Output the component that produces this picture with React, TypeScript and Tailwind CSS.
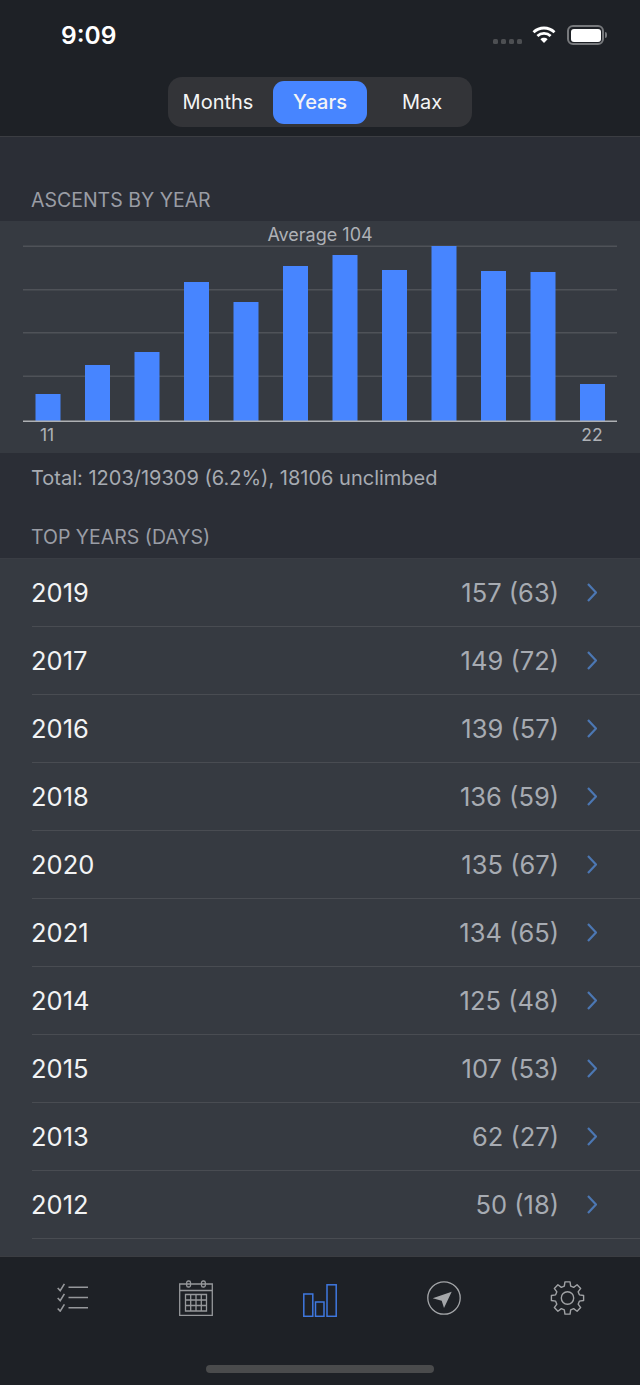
const barHeights = [27, 56, 69, 139, 119, 155, 166, 151, 175, 150, 149, 37];
const gridLines = [24.5, 68, 111, 154.5];

const topYears = [
  { year: '2019', value: '157 (63)' },
  { year: '2017', value: '149 (72)' },
  { year: '2016', value: '139 (57)' },
  { year: '2018', value: '136 (59)' },
  { year: '2020', value: '135 (67)' },
  { year: '2021', value: '134 (65)' },
  { year: '2014', value: '125 (48)' },
  { year: '2015', value: '107 (53)' },
  { year: '2013', value: '62 (27)' },
  { year: '2012', value: '50 (18)' },
];

function gearPath() {
  const points: string[] = [];
  const at = (r: number, deg: number) => {
    const a = (deg * Math.PI) / 180;
    return `${(17.5 + r * Math.sin(a)).toFixed(2)} ${(17 - r * Math.cos(a)).toFixed(2)}`;
  };
  for (let i = 0; i < 8; i++) {
    const c = i * 45;
    points.push(at(12.3, c - 15), at(16.3, c - 9), at(16.3, c + 9), at(12.3, c + 15));
  }
  return `M${points.join('L')}Z`;
}

function WifiIcon() {
  return (
    <svg width="24" height="17" viewBox="0 0 24 17" fill="none" stroke="white" strokeWidth="2.8">
      <path d="M1.5 6.2C7.4 .6 16.6 .6 22.5 6.2" />
      <path d="M5.4 10C9 6.6 15 6.6 18.6 10" />
      <path d="M12 17l-3.6-3.8c2-1.8 5.2-1.8 7.2 0z" fill="white" stroke="none" />
    </svg>
  );
}

function BatteryIcon() {
  return (
    <div className="flex items-center gap-[1px]">
      <div className="w-[37px] h-[20px] rounded-[6px] border-2 border-[#77797c] p-[1.5px]">
        <div className="w-full h-full rounded-[3px] bg-white" />
      </div>
      <div className="w-[2px] h-[6px] rounded-r bg-[#77797c]" />
    </div>
  );
}

function ChecklistIcon() {
  return (
    <svg width="31" height="29" viewBox="0 0 31 29" fill="none" stroke="#96989b" strokeWidth="1.6">
      <path d="M.7 5l2.5 2.6L7.4.8M.7 15l2.5 2.6 4.2-6.8M.7 25.500l2.500 2.600 4.200-6.800" />
      <path d="M11.500 4.300H31M11.500 14.500H31M11.500 24.800H31" />
    </svg>
  );
}

function CalendarIcon() {
  return (
    <svg width="34" height="36" viewBox="0 0 34 36" fill="none" stroke="#96989b" strokeWidth="1.300">
      <path d="M.7 4h7M11.500 4h11M26.500 4h6.800v31.300H.7V4zM.7 10.500h32.600" />
      <rect x="7.700" y="1" width="3.800" height="6" rx="1.600" />
      <rect x="22.500" y="1" width="3.800" height="6" rx="1.600" />
      <path d="M6.500 14.500h21v16.500h-21zM6.500 20h21M6.500 25.500h21M11.700 14.500v16.500M17 14.500v16.500M22.300 14.500v16.500" />
    </svg>
  );
}

function BarsIcon() {
  return (
    <svg width="34" height="33" viewBox="0 0 34 33" fill="none" stroke="#3f78e0" strokeWidth="1.500">
      <rect x=".8" y="10" width="9" height="22.300" />
      <rect x="12.500" y="18" width="8.500" height="14.300" />
      <rect x="24" y=".8" width="9.200" height="31.500" />
    </svg>
  );
}

function NavigateIcon() {
  return (
    <svg width="34" height="34" viewBox="0 0 34 34" fill="none">
      <circle cx="17" cy="17" r="16.200" stroke="#a4a6a9" strokeWidth="1.300" />
      <path d="M5.700 17.300L24.700 10.700 17 27l-2.300-7.300z" fill="#a4a6a9" />
    </svg>
  );
}

function GearIcon() {
  return (
    <svg width="35" height="34" viewBox="0 0 35 34" fill="none" stroke="#a0a2a5" strokeWidth="1.400" strokeLinejoin="round">
      <path d={gearPath()} />
      <circle cx="17.500" cy="17" r="6.200" />
    </svg>
  );
}

function Chart() {
  return (
    <svg width="640" height="232" viewBox="0 0 640 232" className="block" style={{ fontFamily: 'Inter, sans-serif' }}>
      {gridLines.map((y) => (
        <rect key={y} x="23" y={y} width="594" height="1.500" fill="#4f5258" />
      ))}
      {barHeights.map((h, i) => (
        <rect key={i} x={35.5 + i * 49.5} y={200 - h} width="25" height={h} fill="#4785ff" />
      ))}
      <rect x="23" y="199.500" width="594" height="1.500" fill="#aeb0b3" />
      <text x="320" y="20" textAnchor="middle" fontSize="18" fill="#aeb1b6">Average 104</text>
      <text x="47" y="220" textAnchor="middle" fontSize="17.500" fill="#aeb1b6">11</text>
      <text x="592" y="220" textAnchor="middle" fontSize="17.500" fill="#aeb1b6">22</text>
    </svg>
  );
}

function YearRow({ year, value }: { year: string; value: string }) {
  return (
    <div className="pl-8">
      <div className="h-[68px] flex items-center justify-between border-b border-[#494c52] pr-[43px]">
        <span className="text-[25.500px] -ml-[1px] mt-[1px] text-[#f2f3f4]">{year}</span>
        <div className="flex items-center gap-[28px]">
          <span className="text-[25.500px] mt-[1px] text-[#a7abb2]">{value}</span>
          <svg width="10" height="19" viewBox="0 0 10 19" fill="none" stroke="#4c77b3" strokeWidth="2.200">
            <path d="M1 1l8 8.500-8 8.500" />
          </svg>
        </div>
      </div>
    </div>
  );
}

export default function App() {
  return (
    <div className="w-[640px] h-[1385px] flex flex-col bg-[#2b2e36] font-['Inter',sans-serif] overflow-hidden">
      <header className="h-[137px] bg-[#1e2126] border-b border-[#3b3d42] flex flex-col items-center">
        <div className="w-full h-[77px] flex justify-between pl-[61px] pr-[33px] pt-[20px]">
          <span className="text-[24.500px] leading-[30px] font-semibold text-white">9:09</span>
          <div className="flex items-start">
            <div className="flex gap-[2.500px] mt-[19px] mr-[10px]">
              <div className="w-[5.500px] h-[5px] rounded-[1.500px] bg-[#4d4f52]" />
              <div className="w-[5.500px] h-[5px] rounded-[1.500px] bg-[#4d4f52]" />
              <div className="w-[5.500px] h-[5px] rounded-[1.500px] bg-[#4d4f52]" />
              <div className="w-[5.500px] h-[5px] rounded-[1.500px] bg-[#4d4f52]" />
            </div>
            <div className="mt-[6px] mr-[11px]"><WifiIcon /></div>
            <div className="mt-[5px]"><BatteryIcon /></div>
          </div>
        </div>
        <div className="w-[304px] h-[50px] rounded-[14px] bg-[#333438] flex items-center gap-[8px] px-[3px] text-[20px] text-[#f4f4f5]">
          <div className="w-[94px] text-center">Months</div>
          <div className="w-[94px] h-[43px] rounded-[11px] bg-[#4785ff] flex items-center justify-center font-medium">Years</div>
          <div className="w-[94px] text-center">Max</div>
        </div>
      </header>

      <div className="h-[84px] flex items-end pl-[31px] pb-[9px]">
        <h2 className="text-[19.500px] leading-[24px] text-[#9a9da5]">ASCENTS BY YEAR</h2>
      </div>

      <section className="h-[232px] bg-[#363a41]">
        <Chart />
      </section>

      <div className="h-[106px] pl-[31px] border-b border-[#3a3d44]">
        <p className="mt-[13px] text-[20px] leading-[24px] text-[#a7abb2]">Total: 1203/19309 (6.2%), 18106 unclimbed</p>
        <h2 className="mt-[35px] text-[19.500px] leading-[24px] text-[#9a9da5]">TOP YEARS (DAYS)</h2>
      </div>

      <div className="flex-1 bg-[#363a41]">
        {topYears.map((row) => (
          <YearRow key={row.year} year={row.year} value={row.value} />
        ))}
      </div>

      <nav className="h-[129px] bg-[#1e2126] border-t border-[#3b3d42] flex flex-col items-center">
        <div className="w-full h-[108px] grid grid-cols-5 px-[10px] pt-[23px] justify-items-center items-start">
          <div className="mt-[3px]"><ChecklistIcon /></div>
          <CalendarIcon />
          <div className="mt-[4px]"><BarsIcon /></div>
          <div className="mt-[1px]"><NavigateIcon /></div>
          <div className="mt-[1px] -ml-[1px]"><GearIcon /></div>
        </div>
        <div className="w-[228px] h-[8px] rounded-full bg-[#4a4b4c]" />
      </nav>
    </div>
  );
}
